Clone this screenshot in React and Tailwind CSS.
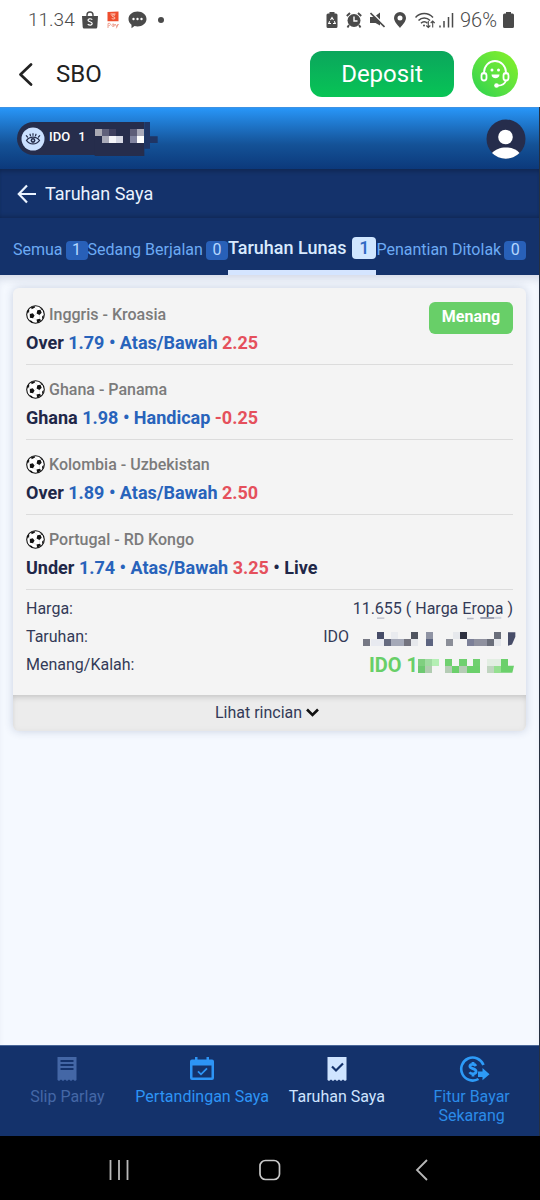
import React from "react";

const BLOCKS = {
  balance: [
    [282, 70, 22, "#a9a9b3"], [304, 70, 20, "#5f607a"], [324, 70, 20, "#3e3f5e"],
    [388, 70, 20, "#5d5d78"], [408, 70, 21, "#a9a9b8"],
    [304, 91, 20, "#a9aab8"], [324, 91, 22, "#f4f4f8"], [346, 91, 21, "#d6d8e4"],
    [388, 91, 20, "#8184a0"], [408, 91, 21, "#ffffff"],
  ],
  stake: [
    [320, 154, 22, "#474d68"], [362, 154, 21, "#e9ebef"], [423, 154, 21, "#50545f"],
    [466, 154, 21, "#8f93a3"], [547, 154, 21, "#e6e8ec"], [569, 154, 21, "#2e3140"],
    [671, 154, 22, "#6a6e7a"], [278, 174, 22, "#767884"], [302, 174, 40, "#e8eaf0"],
    [342, 174, 20, "#666b80"], [362, 174, 40, "#a5a9b8"], [402, 174, 21, "#74747f"],
    [423, 174, 21, "#e6e8ec"], [466, 174, 21, "#5c6480"], [526, 174, 21, "#8b8e98"],
    [590, 174, 20, "#7c8098"], [610, 174, 40, "#8f919f"], [650, 174, 21, "#6a6e7a"],
    [671, 174, 22, "#e6e8ec"],
  ],
  win: [
    [444, 237, 22, "#7fcf80"], [466, 237, 21, "#9fdba1"], [487, 237, 20, "#b4efb4"],
    [526, 237, 21, "#6fd06f"], [568, 237, 22, "#6fd06f"], [610, 237, 20, "#6fd06f"],
    [650, 237, 43, "#e2eee2"], [693, 237, 20, "#6bd06b"],
    [444, 257, 22, "#6dc971"], [466, 257, 21, "#b0ccb0"], [526, 257, 21, "#b5ccb5"],
    [547, 257, 21, "#6bd06b"], [568, 257, 22, "#b5ccb5"], [590, 257, 40, "#6bd06b"],
    [650, 257, 21, "#c0d5c0"], [671, 257, 22, "#95e090"],
  ],
};

function Blocks({ cells }) {
  return cells.map(([x, y, w, fill]) => (
    <rect key={`${x}-${y}`} x={x} y={y} width={w} height="21" fill={fill} shapeRendering="crispEdges" />
  ));
}

function StatusBar() {
  return (
    <div className="flex h-10 items-center justify-between pl-7 pr-[26px] text-[#4a4a4a]">
      <div className="flex items-center gap-[7px]">
        <span className="text-[19px] font-light">11.34</span>
        <svg className="h-[18px] w-4" viewBox="0 0 16 18">
          <path d="M5 5V4a3 3 0 0 1 6 0v1" fill="none" stroke="currentColor" strokeWidth="1.4" />
          <path d="M0 5h16l-.7 11a1.5 1.5 0 0 1-1.500 1.500H2.200A1.500 1.500 0 0 1 .7 16z" fill="currentColor" />
          <path d="M10.300 8.600C8.500 7.200 5.900 7.700 6 9.200c.1 1.800 4.200 1.300 4.200 3.400 0 1.700-2.700 2-4.500.6" fill="none" stroke="#fff" strokeWidth="1.200" />
        </svg>
        <svg className="mx-[2px] h-[18px] w-3" viewBox="0 0 12 18">
          <path d="M.5 1 11.500.5v9.700H.5z" fill="#ee4d2d" />
          <path d="M3.500 3h5M8 4.300C6 3.300 4.500 4 5 5s3 .8 3 2-2 1.200-3.300.5" fill="none" stroke="#ffd8c9" strokeWidth=".9" />
          <path d="M1 17v-4.500c3-1 3.500 2 .3 2.300M6.800 13c-2.200-.5-2.500 2.500-.8 2.500 1 0 1-1 1-2.500v2.500M8.300 13l1.200 2.500L11.300 13l-2 4.300" fill="none" stroke="#e88a77" strokeWidth=".8" />
        </svg>
        <svg className="h-[18px] w-[19px]" viewBox="0 0 19 18">
          <path d="M9.500.5C14.600.5 18.500 3.700 18.500 8s-4 7.500-9 7.500c-1 0-2-.1-3-.4L3.500 17.200v-3.500C1.600 12.300.5 10.300.5 8 .5 3.700 4.400.5 9.500.5z" fill="currentColor" />
          <g fill="#fff"><circle cx="5.500" cy="8" r="1.200" /><circle cx="9.500" cy="8" r="1.200" /><circle cx="13.500" cy="8" r="1.200" /></g>
        </svg>
        <span className="ml-1 size-[6px] rounded-full bg-[#4a4a4a]" />
      </div>
      <div className="flex items-center gap-2">
        <svg className="h-4 w-3" viewBox="0 0 12 16">
          <path d="M3.500 0h5v1.500H10A1.500 1.500 0 0 1 11.500 3v11.500A1.500 1.500 0 0 1 10 16H2a1.500 1.500 0 0 1-1.500-1.500V3A1.500 1.500 0 0 1 2 1.500h1.500z" fill="currentColor" />
          <path d="m4.500 8 1.500-2.500L7.500 8M8.300 9.200l1 2.300H7M5 11.500H2.700l1-2.300" fill="none" stroke="#fff" strokeWidth="1.100" />
        </svg>
        <svg className="h-4 w-4" viewBox="0 0 16 16">
          <circle cx="8" cy="8.500" r="6.500" fill="currentColor" />
          <path d="M.8 4 4 1M15.200 4 12 1M3 13l-1.500 2.500M13 13l1.500 2.500" stroke="currentColor" strokeWidth="1.900" />
          <path d="M8 4.500V9h3.500" fill="none" stroke="#fff" strokeWidth="1.400" />
        </svg>
        <svg className="h-4 w-[15px]" viewBox="0 0 15 16">
          <path d="M0 5h4l6-4.500v13L5.500 11H0z" fill="currentColor" />
          <path d="m1.500 0 14 14" stroke="#fff" strokeWidth="1.500" />
          <path d="m.5 1 14 14" stroke="currentColor" strokeWidth="1.600" />
        </svg>
        <svg className="h-4 w-[14px]" viewBox="0 0 14 16">
          <path d="M7 0a6 6 0 0 1 6 6c0 3.500-3.700 7-6 10C4.700 13 1 9.500 1 6a6 6 0 0 1 6-6zm0 3.500a2.500 2.500 0 1 0 0 5 2.500 2.500 0 0 0 0-5z" fill="currentColor" fillRule="evenodd" />
        </svg>
        <svg className="h-[17px] w-5" viewBox="0 0 20 17">
          <g fill="none" stroke="currentColor" strokeWidth="1.500">
            <path d="M.5 5.500c4.800-5.300 12.700-5.300 17.500 0M3.500 8.500c3.200-3.500 8.300-3.500 11.500 0M6 11.300c1.800-2 4.500-2 6.500 0" />
            <path d="M13.300 9v6.500m-2-2 2 2 2-2M17.700 15.500V9m-2 2 2-2 2 2" strokeWidth="1.100" />
          </g>
          <circle cx="9" cy="13.500" r="1" fill="currentColor" />
        </svg>
        <svg className="-ml-1 h-4 w-[15px]" viewBox="0 0 15 16">
          <path d="M1 13.500V15.500M5 9v6.500M9.500 5v10.500M13.500 1v14.500" stroke="currentColor" strokeWidth="1.500" />
        </svg>
        <span className="-mx-[2px] text-xl font-light">96%</span>
        <svg className="h-4 w-[11px]" viewBox="0 0 11 16">
          <path d="M3 0h5v1.500h1.500A1.500 1.500 0 0 1 11 3v11.500A1.500 1.500 0 0 1 9.500 16h-8A1.500 1.500 0 0 1 0 14.500V3a1.500 1.500 0 0 1 1.500-1.500H3z" fill="currentColor" />
        </svg>
      </div>
    </div>
  );
}

function AppHeader() {
  return (
    <header className="flex h-[67px] items-center pl-[18px] pr-[22px]">
      <button aria-label="Kembali" className="mr-[22px]">
        <svg className="h-6 w-4" viewBox="0 0 16 24">
          <path d="M13 2.500 2.500 12.500l10.500 10" fill="none" stroke="#222" strokeWidth="2.700" strokeLinecap="round" strokeLinejoin="round" />
        </svg>
      </button>
      <h1 className="flex-1 text-2xl text-[#222]">SBO</h1>
      <button className="mr-[18px] h-[46px] w-36 rounded-xl bg-linear-to-b from-[#0ba65c] to-[#07c455] text-2xl text-white">
        Deposit
      </button>
      <button aria-label="Layanan pelanggan" className="size-[46px] rounded-full bg-linear-to-bl from-[#86f21f] to-[#1fd24f]">
        <svg className="size-[46px]" viewBox="0 0 46 46">
          <g fill="none" stroke="#fff" strokeWidth="1.800" strokeLinecap="round">
            <path d="M12 22.500v-1a11 11.500 0 0 1 22 0v1" />
            <rect x="9.500" y="22" width="5" height="7.500" rx="2.500" />
            <rect x="31.500" y="22" width="5" height="7.500" rx="2.500" />
            <path d="M34 29.500c-1 3-4 5-8 5.200" />
          </g>
          <circle cx="24.500" cy="34.500" r="2.300" fill="#fff" />
          <circle cx="20" cy="19" r="1.500" fill="#fff" />
          <circle cx="26.500" cy="19" r="1.500" fill="#fff" />
          <path d="M19.500 23.500h8c0 5-8 5-8 0z" fill="#fff" />
        </svg>
      </button>
    </header>
  );
}

function AccountBar() {
  return (
    <div className="flex h-[62px] items-center justify-between border-t border-[#3e93e4] bg-linear-to-b from-[#2896f8] via-[#145297] via-60% to-[#0c397b] pl-[17px] pr-[13px]">
      <button aria-label="Tampilkan saldo" className="flex items-center text-[13px] font-medium text-white">
        <span className="flex h-[33px] items-center rounded-l-full bg-[#262d4c] pl-1">
          <svg className="mr-1 size-6" viewBox="0 0 24 24">
            <circle cx="12" cy="12" r="11.500" fill="#cbe0ff" />
            <path d="M5.500 13.500c3-4.500 10-4.500 13 0-3 4.500-10 4.500-13 0z" fill="none" stroke="#262d4c" strokeWidth="1.300" />
            <circle cx="12" cy="13.500" r="2.400" fill="#262d4c" />
            <circle cx="12" cy="13.300" r=".9" fill="#cbe0ff" />
            <path d="M6.500 10 5.300 8.700M9.500 8.800 9 7.200M14.500 8.800l.5-1.600M17.500 10l1.200-1.300M12 8.300V6.700" stroke="#262d4c" strokeWidth="1.200" strokeLinecap="round" />
          </svg>
          <span className="mr-[9px] flex gap-2 pb-[3px]"><span>IDO</span><span>1</span></span>
        </span>
        <svg className="h-[33px] w-[63px] overflow-visible" viewBox="282 49 189 99">
          <path d="M430 49h17v43h23v20h-23v17h-17z" fill="#1f3564" />
          <path d="M281 49h149v102H281z" fill="#262d4c" />
          <Blocks cells={BLOCKS.balance} />
        </svg>
      </button>
      <button aria-label="Profil">
        <svg className="size-10" viewBox="0 0 40 40">
          <circle cx="20" cy="20" r="19.500" fill="#262d4c" />
          <circle cx="19.500" cy="18" r="7.300" fill="#fff" />
          <path d="M6 34c6-7.500 21.500-7.500 27.500 0a19.500 19.500 0 0 1-27.500 0z" fill="#fff" />
        </svg>
      </button>
    </div>
  );
}

const TABS = [
  { label: "Semua", count: 1 },
  { label: "Sedang Berjalan", count: 0 },
  { label: "Taruhan Lunas", count: 1, active: true },
  { label: "Penantian Ditolak", count: 0 },
];

function Tabs() {
  return (
    <nav className="flex h-[57px] justify-between bg-[#14326b] px-[13px]">
      {TABS.map(({ label, count, active }) => (
        <button
          key={label}
          className={
            active
              ? "flex items-center gap-[6px] whitespace-nowrap border-b-[5px] border-[#d5e5ff] pt-2 text-lg font-medium text-[#d8eaff]"
              : "flex items-center gap-[3px] whitespace-nowrap border-b-[5px] border-transparent pt-3 text-base text-[#6caaf4]"
          }
        >
          {label}
          <span
            className={
              active
                ? "h-[22px] w-6 rounded bg-[#d0e6ff] text-center leading-[22px] text-[#2f6ac4]"
                : "h-[19px] w-[22px] rounded bg-[#2860b8] text-center leading-[18px] text-[#b5d7ff]"
            }
          >
            {count}
          </span>
        </button>
      ))}
    </nav>
  );
}

const BETS = [
  { match: "Inggris - Kroasia", pick: "Over", odds: "1.79", market: "Atas/Bawah", line: "2.25" },
  { match: "Ghana - Panama", pick: "Ghana", odds: "1.98", market: "Handicap", line: "-0.25" },
  { match: "Kolombia - Uzbekistan", pick: "Over", odds: "1.89", market: "Atas/Bawah", line: "2.50" },
  { match: "Portugal - RD Kongo", pick: "Under", odds: "1.74", market: "Atas/Bawah", line: "3.25", live: true },
];

function Football() {
  return (
    <svg className="size-[19px]" viewBox="0 0 19 19">
      <circle cx="9.500" cy="9.500" r="8.800" fill="#fff" stroke="#111" strokeWidth="1.100" />
      <g fill="#111">
        <path d="m11.300 5.200 3.200-.4 1.200 3-2.300 2.200-2.800-1.600z" />
        <path d="m3.800 9 3-.8 1.800 2.200-1.600 2.800-3.100-.5z" />
        <path d="M5 2.300 8.500.9l.6 1.600-3.400 1.800zM1 7l1.600-2.800.8 1.600L2 8.600zM10.500 14.500l3.300-.8 1.300 1.500-3.800 2.700zM16.300 11l1.500-.7-.7 3-1.200.7zM3.800 15.300l2.200.8 1 1.800-2.500-1zM14 2.500l2.500 2-.8.400z" />
      </g>
      <path d="M8.900 2.500l2.400 2.700M10.600 8.400l-2 2M13.400 10l.4 3.700M7 13.200l3.500 1.300M3.400 5.800l.4 3.200" stroke="#bbb" strokeWidth=".4" />
    </svg>
  );
}

function Bet({ bet, won }) {
  return (
    <li className="border-b border-[#dcdcdc] pb-[9px] pt-3">
      <div className="flex h-6 items-center gap-1 text-base font-medium text-[#7b7b7b]">
        <Football />
        <span className="flex-1 pt-[2px]">{bet.match}</span>
        {won && (
          <span className="mt-[7px] flex h-8 w-[84px] items-center justify-center rounded-md bg-[#68cf68] pb-[2px] font-bold text-white">
            Menang
          </span>
        )}
      </div>
      <p className="mt-[5px] h-6 text-lg font-bold leading-6 text-[#1f2748]">
        {bet.pick} <span className="text-[#2863bb]">{bet.odds} • {bet.market}</span>{" "}
        <span className="text-[#e5505c]">{bet.line}</span>
        {bet.live && " • Live"}
      </p>
    </li>
  );
}

function BetCard() {
  return (
    <article className="overflow-hidden rounded-md bg-[#f4f4f4] shadow-[0_0_10px_rgba(30,50,100,0.2)]">
      <div className="px-[13px] pb-4 pt-[2px]">
        <ul>
          {BETS.map((bet, i) => <Bet key={bet.match} bet={bet} won={i === 0} />)}
        </ul>
        <dl className="pt-[5px] text-base text-[#333a57]">
          <div className="flex h-7 items-center justify-between">
            <dt>Harga:</dt>
            <dd>11.655 ( Harga Eropa )</dd>
          </div>
          <div className="flex h-7 items-center justify-between">
            <dt>Taruhan:</dt>
            <dd className="-mr-[2px] flex items-center gap-[14px]">
              IDO
              <svg className="mt-[3px] h-[14px] w-[152px] overflow-visible" viewBox="278 154 456 41">
                <Blocks cells={BLOCKS.stake} />
                <path d="M713 154h22v14l-10 23-12 4z" fill="#474d68" />
                <path d="M320 110h22v4h-22zM590 111h20v4h-20z" fill="#b9bcc8" />
                <path d="M630 109h42v5h-42z" fill="#8d92a5" />
                <path d="M672 108h21v6h-21z" fill="#d2d6e0" />
              </svg>
            </dd>
          </div>
          <div className="flex h-7 items-center justify-between">
            <dt>Menang/Kalah:</dt>
            <dd className="-mr-[2px] flex items-center text-xl font-bold text-[#68cf68]">
              IDO 1
              <svg className="mt-[1px] h-[14px] w-[97px]" viewBox="444 237 291 41">
                <Blocks cells={BLOCKS.win} />
                <path d="M693 257h39l-5 21h-34z" fill="#6bd06b" />
              </svg>
            </dd>
          </div>
        </dl>
      </div>
      <button className="flex h-9 w-full items-center justify-center gap-1 bg-[#ececec] pb-[1px] pr-[5px] text-base text-[#333a57] shadow-[inset_0_5px_6px_-3px_rgba(0,0,0,0.15),inset_0_0_6px_rgba(0,0,0,0.05)]">
        Lihat rincian
        <svg className="h-[9px] w-[13px]" viewBox="0 0 13 9">
          <path d="m1 1.500 5.500 5.500L12 1.500" fill="none" stroke="#111" strokeWidth="2.600" />
        </svg>
      </button>
    </article>
  );
}

function BottomNav() {
  return (
    <nav className="grid h-[91px] grid-cols-4 border-t border-[#4a6798] bg-[#14326b] text-center text-base leading-[19px]">
      <a href="#slip" className="flex flex-col items-center gap-[5px] pt-[10px] text-[#4467a6]">
        <svg className="size-[26px]" viewBox="0 0 26 26">
          <path d="M3.500 1h19v23l-1.500 1-2-1.500-2 1.500-2-1.500-2 1.500-2-1.500-2 1.500-2-1.500-2 1.500L3.500 24z" fill="currentColor" />
          <path d="M6.500 5h13M6.500 9h13M6.500 13h13" stroke="#14326b" strokeWidth="1.800" />
        </svg>
        Slip Parlay
      </a>
      <a href="#pertandingan" className="flex flex-col items-center gap-[5px] whitespace-nowrap pt-[10px] text-[#2d94f5]">
        <svg className="size-[26px]" viewBox="0 0 26 26">
          <path d="M3 3.500h3V1h2.500v2.500h9V1H20v2.500h3A2 2 0 0 1 25 5.500V22a2 2 0 0 1-2 2H3a2 2 0 0 1-2-2V5.500a2 2 0 0 1 2-2zM3.500 9.500v12h19v-12z" fill="currentColor" fillRule="evenodd" />
          <path d="m9 15.300 3 3 6-6" fill="none" stroke="currentColor" strokeWidth="1.800" />
        </svg>
        Pertandingan Saya
      </a>
      <a href="#taruhan" aria-current="page" className="flex flex-col items-center gap-[5px] pt-[10px] text-[#cfe4ff]">
        <svg className="size-[26px]" viewBox="0 0 26 26">
          <path d="M3.500 1h19v23l-1.500 1-2-1.500-2 1.500-2-1.500-2 1.500-2-1.500-2 1.500-2-1.500-2 1.500L3.500 24z" fill="currentColor" />
          <path d="m8 10.500 4 4 7-7" fill="none" stroke="#14326b" strokeWidth="2.200" />
        </svg>
        Taruhan Saya
      </a>
      <a href="#bayar" className="flex flex-col items-center gap-[5px] px-6 pt-[10px] text-[#2b8be8]">
        <svg className="ml-1 h-[26px] w-8" viewBox="0 0 32 26">
          <path d="M25.500 9A11.500 11.500 0 1 0 20.500 23" fill="none" stroke="#2d9bf8" strokeWidth="2.600" />
          <path d="M18 10C16.500 7.500 11.700 7.800 11.900 10.300c.2 2.800 6.200 2 6.200 5.300 0 2.700-5 2.900-6.600.7M15 6v3M15 17v3.500" fill="none" stroke="#2d9bf8" strokeWidth="2.800" />
          <path d="M20 15.500h4.500V12l7 6.300-7 6V21H20z" fill="#2d9bf8" />
        </svg>
        Fitur Bayar Sekarang
      </a>
    </nav>
  );
}

function SystemNav() {
  return (
    <div className="flex h-16 items-center justify-around bg-black px-[43px] pt-1">
      <button aria-label="Aplikasi terbaru">
        <svg className="h-6 w-6" viewBox="0 0 24 24"><path d="M3.500 2v20M12 2v20M20.500 2v20" stroke="#b8b8b8" strokeWidth="1.800" /></svg>
      </button>
      <button aria-label="Beranda">
        <svg className="h-6 w-6" viewBox="0 0 24 24"><rect x="2" y="2.500" width="19.500" height="19" rx="5.500" fill="none" stroke="#c8c8c8" strokeWidth="1.700" /></svg>
      </button>
      <button aria-label="Kembali ke layar sebelumnya">
        <svg className="h-6 w-6" viewBox="0 0 24 24"><path d="M18 2 8 12l10 10" fill="none" stroke="#b8b8b8" strokeWidth="1.800" /></svg>
      </button>
    </div>
  );
}

export default function App() {
  return (
    <div className="flex min-h-screen flex-col bg-white font-['Roboto',sans-serif]">
      <StatusBar />
      <AppHeader />
      <div className="flex flex-1 flex-col border-r border-[#26303f] bg-[#f5f9ff]">
        <AccountBar />
        <div className="flex h-[49px] items-center gap-2 bg-[#14326b] pl-[17px] text-lg text-[#eaf3ff] shadow-[inset_0_5px_5px_-3px_rgba(0,0,0,0.25),inset_0_-4px_5px_-3px_rgba(0,0,0,0.25)]">
          <button aria-label="Kembali ke beranda">
            <svg className="h-5 w-5" viewBox="0 0 20 20">
              <path d="M19 10H2.500M10 1.500 1.800 10l8.200 8.500" fill="none" stroke="#eaf3ff" strokeWidth="2.200" />
            </svg>
          </button>
          <h2>Taruhan Saya</h2>
        </div>
        <Tabs />
        <main className="flex-1 px-[13px] pt-[13px] shadow-[inset_0_8px_8px_-4px_rgba(30,40,90,0.15)]">
          <BetCard />
        </main>
        <BottomNav />
      </div>
      <SystemNav />
    </div>
  );
}
